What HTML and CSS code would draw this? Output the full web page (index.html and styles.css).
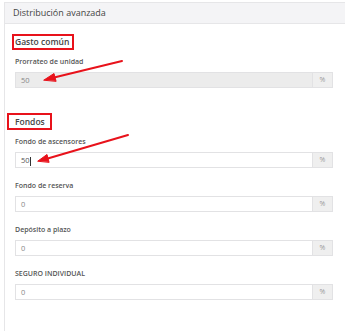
FILE: index.html
```html
<!DOCTYPE html>
<html lang="es">
  <head>
    <meta charset="UTF-8" />
    <meta name="viewport" content="width=device-width, initial-scale=1.0" />
    <title>Distribución avanzada</title>
    <link rel="stylesheet" href="styles.css">
  </head>
  <body>
    <div class="panel">
      <div class="panel-header">Distribución avanzada</div>
      <div class="panel-body">
        <h3 class="section-title title-gasto">Gasto común</h3>
        <div class="field">
          <label>Prorrateo de unidad</label>
          <div class="input-group disabled">
            <span class="input">50</span>
            <span class="addon">%</span>
          </div>
        </div>

        <h3 class="section-title title-fondos">Fondos</h3>
        <div class="field">
          <label>Fondo de ascensores</label>
          <div class="input-group">
            <span class="input active">50<i class="caret"></i></span>
            <span class="addon">%</span>
          </div>
        </div>
        <div class="field">
          <label>Fondo de reserva</label>
          <div class="input-group">
            <span class="input">0</span>
            <span class="addon">%</span>
          </div>
        </div>
        <div class="field">
          <label>Depósito a plazo</label>
          <div class="input-group">
            <span class="input">0</span>
            <span class="addon">%</span>
          </div>
        </div>
        <div class="field">
          <label>SEGURO INDIVIDUAL</label>
          <div class="input-group">
            <span class="input">0</span>
            <span class="addon">%</span>
          </div>
        </div>
      </div>
    </div>

    <!-- annotation arrows -->
    <svg class="arrows" width="345" height="331" viewBox="0 0 345 331">
      <g stroke="#e8121b" stroke-width="2" stroke-linecap="round" fill="#e8121b">
        <line x1="122" y1="61" x2="52" y2="78" />
        <polygon points="44,80 54,73.5 56,81" stroke-width="1" />
        <line x1="128" y1="135" x2="46" y2="159" />
        <polygon points="38,161 47,154.5 49,162" stroke-width="1" />
      </g>
    </svg>
  </body>
</html>
```

FILE: styles.css
```css
body {
  font-family: "Open Sans", "DejaVu Sans", sans-serif;
  margin: 0;
  padding: 0;
  background-color: #fff;
  color: #555;
}
.panel {
  margin: 2px 0 0 4px;
  border-left: 1px solid #e6e6e8;
  border-top: 1px solid #e6e6e8;
  height: 329px;
  box-sizing: border-box;
}
.panel-header {
  height: 20px;
  line-height: 20px;
  padding-left: 8px;
  background-color: #f4f4f6;
  border-bottom: 1px solid #e6e6e8;
  font-size: 9px;
  color: #444;
}
.panel-body {
  padding: 10px 12px 0 10px;
}
.section-title {
  display: block;
  width: fit-content;
  margin: 0 0 6px;
  font-size: 8.5px;
  font-weight: 600;
  color: #444;
  line-height: 12px;
  border: 2px solid #e8121b;
}
.title-gasto {
  margin-left: -3px;
  padding: 0 3px 0 1px;
}
.title-fondos {
  margin-left: -8px;
  margin-top: 25px;
  padding: 1px 5px 0 6px;
}
.field {
  margin-bottom: 12px;
}
.field label {
  display: block;
  font-size: 7px;
  font-weight: 600;
  color: #555;
  line-height: 12px;
  margin-bottom: 4px;
}
.input-group {
  display: flex;
  height: 16px;
  border: 1px solid #e2e2e4;
  box-sizing: border-box;
  background-color: #fff;
}
.input-group.disabled {
  background-color: #ececec;
}
.input {
  flex: 1;
  padding-left: 5px;
  font-size: 7.5px;
  line-height: 14px;
  color: #888;
}
.input.active {
  color: #555;
}
.caret {
  display: inline-block;
  width: 1px;
  height: 9px;
  background-color: #333;
  vertical-align: middle;
}
.addon {
  width: 19px;
  border-left: 1px solid #e2e2e4;
  background-color: #efefef;
  text-align: center;
  font-size: 7px;
  line-height: 14px;
  color: #999;
}
.arrows {
  position: absolute;
  top: 0;
  left: 0;
  pointer-events: none;
}
```
